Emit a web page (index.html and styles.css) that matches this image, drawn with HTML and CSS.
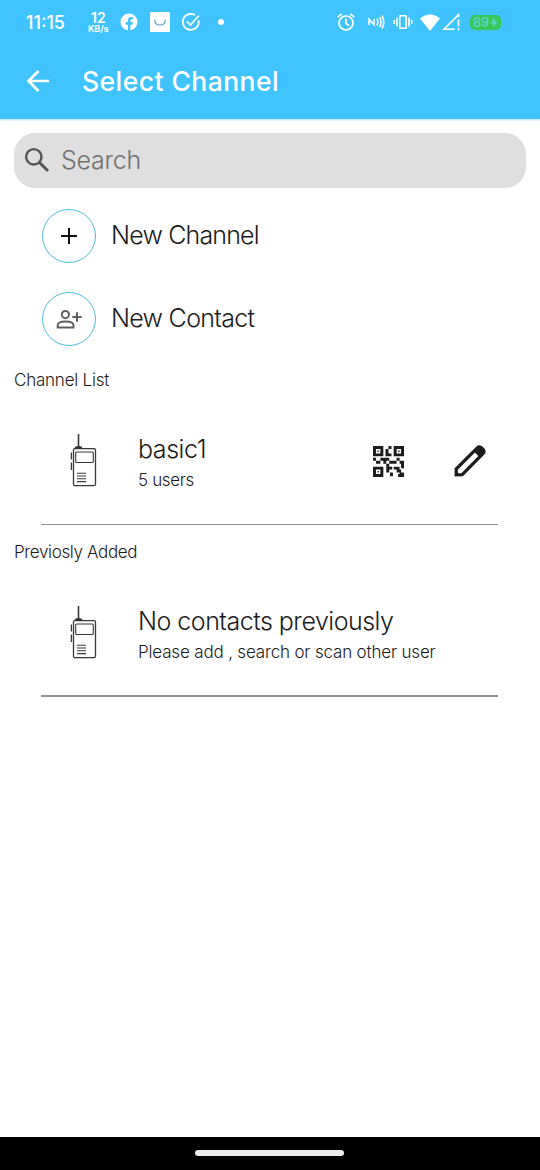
FILE: index.html
```html
<!DOCTYPE html>
<html lang="en">
<head>
<meta charset="utf-8">
<title>Select Channel</title>
<link rel="stylesheet" href="styles.css">
</head>
<body>
<svg class="defs" aria-hidden="true">
  <symbol id="radio" viewBox="0 0 32 56">
    <g fill="none" stroke="#383838" stroke-width="1.3">
      <path d="M8.500 1V14" stroke-width="1.600"/>
      <path d="M5.500 15.500v-1.200q3-1.400 6 0v1.200" fill="#303030"/>
      <rect x="3.500" y="15.700" width="22" height="37" rx="1.500"/>
      <rect x="5.700" y="19" width="17.600" height="10.500" rx="1" stroke-width="1.100"/>
      <path d="M1.400 19.500v7M1.400 29.500v7.500"/>
      <path d="M7 40.200h9M7 43h9M7 45.800h9M7 48.600h9" stroke-width="1.100"/>
    </g>
  </symbol>
</svg>
<header class="header">
  <div class="status">
    <span class="time">11:15</span>
    <span class="speed"><b>12</b><small>KB/s</small></span>
    <svg class="facebook" width="18" height="18" viewBox="0 0 18 18"><circle cx="9" cy="9" r="8.500" fill="#fff"/><path d="M8 18v-6.300H5.700V9H8V7.300Q8 4 11.200 4h1.600v2.300h-1.200q-1.200 0-1.200 1.200V9h2.400l-.4 2.700h-2V18z" fill="#40c4ff"/></svg>
    <svg class="shop" width="20" height="20" viewBox="0 0 20 20"><rect width="20" height="20" rx="1" fill="#fff"/><path d="M4.800 7.500v1q0 4.500 5.200 4.500t5.200-4.500v-1" fill="none" stroke="#5aa5c5" stroke-width="1.200"/></svg>
    <svg class="task" width="20" height="20" viewBox="0 0 20 20" fill="none" stroke="#fff" stroke-width="1.700"><path d="M14 3.100A8 8 0 1 0 17.600 8.300M5.800 9.400l3.600 3.700L17.800 3.700"/></svg>
    <i class="dot"></i>
    <svg class="alarm" width="20" height="20" viewBox="0 0 20 20" fill="none" stroke="#fff" stroke-width="1.700"><circle cx="10" cy="11" r="7"/><path d="M10 6.500v5l3 2M1.700 5.200l4-3.400M18.300 5.200l-4-3.400"/></svg>
    <svg class="nfc" width="18" height="16" viewBox="0 0 18 16" fill="none" stroke="#fff" stroke-width="1.600"><path d="M2 11V5.300l5 5.400V5M10 4.500q1.700 3.500 0 7M12.700 3q2.600 5 0 10M15 1.500q3.600 6.500 0 13"/></svg>
    <svg class="vibrate" width="20" height="16" viewBox="0 0 20 16" fill="none" stroke="#fff" stroke-width="1.600"><rect x="6.800" y="1.800" width="6.400" height="12.400" rx=".5"/><path d="M4 3.500v9M16 3.500v9M1.300 6v4M18.700 6v4"/></svg>
    <svg class="wifi" width="20" height="17" viewBox="0 0 20 17"><path d="M0 4.500Q10-3.700 20 4.500L10 17z" fill="#fff"/></svg>
    <svg class="signal" width="19" height="18" viewBox="0 0 19 18" fill="none" stroke="#fff" stroke-width="1.600"><path d="M12.500 16.200H2L16.500 1.700V4M16.500 6.500v7M16.500 15v2.500"/></svg>
    <span class="battery">89<svg width="8" height="11" viewBox="0 0 9 12"><path d="M6 0L0 7h4l-1 5 6-7H5z" fill="#5fd3c4"/></svg></span>
  </div>
  <div class="appbar">
    <svg class="back" width="24" height="24" viewBox="0 0 24 24" fill="none" stroke="#fff" stroke-width="2.700"><path d="M23 12H3M12.500 2L2.500 12l10 10"/></svg>
    <h1>Select Channel</h1>
  </div>
</header>
<main class="content">
  <div class="search">
    <svg width="26" height="26" viewBox="0 0 26 26" fill="none" stroke="#555"><circle cx="9.800" cy="9.800" r="7.700" stroke-width="2.400"/><path d="M15.500 15.500l8.500 8.500" stroke-width="3"/></svg>
    <span>Search</span>
  </div>
  <div class="action">
    <span class="circle"><svg width="18" height="18" viewBox="0 0 18 18"><path d="M9 1v16M1 9h16" stroke="#111" stroke-width="2"/></svg></span>
    <span class="label channel">New Channel</span>
  </div>
  <div class="action">
    <span class="circle"><svg width="26" height="20" viewBox="0 0 26 20" fill="none" stroke="#606060" stroke-width="2"><circle cx="9.400" cy="5.600" r="3.600"/><path d="M1.700 18.400v-2.200q0-3.700 7.900-3.700t7.900 3.700v2.200zM21 3.300v9.400M16.300 8h9.400"/></svg></span>
    <span class="label contact">New Contact</span>
  </div>
  <h2 class="list-title">Channel List</h2>
  <div class="row">
    <svg class="device" width="32" height="56"><use href="#radio"/></svg>
    <div class="copy"><div class="name basic">basic1</div><div class="sub users">5 users</div></div>
    <svg class="qr" width="31" height="31" viewBox="0 0 21 21" fill="#1c1c1c" fill-rule="evenodd"><path d="M0 0h7v7H0zM2 2v3h3V2zM14 0h7v7h-7zM16 2v3h3V2zM0 14h7v7H0zM2 16v3h3v-3z"/><path d="M3 3h1v1H3zM17 3h1v1h-1zM3 17h1v1H3zM10.500 0h2v2h-2zM8.500 2h2v3h2v2h-4zM0 8h2v2H0zM2 10h3v2H2zM5 8h6v2H9v2H7v-2H5zM11 10h5v2h-5zM16 8h2v2h-2zM18 10h3v5h-2v-3h-1zM9 12h2v2h2v2h-2v2H9zM14 14h4v2h1v2h2v3h-4v-2h1v-1h-2v-2h-2zM11.500 18h2v2.500h-2z"/></svg>
    <svg class="pencil" width="32" height="32" viewBox="0 0 32 32"><path d="M2.200 29.800V24L23.300 2.900q2-2 4.500.3l1.200 1.200q2 2.200 0 4.300L8.200 29.700z" fill="#fff" stroke="#1c1c1c" stroke-width="3.200"/><path d="M19.500 6l4.500-4.500h4L31 4.500V8l-5 4.800zM1 31v-6l6 6z" fill="#1c1c1c"/></svg>
  </div>
  <h2 class="list-title previous">Previosly Added</h2>
  <div class="row last">
    <svg class="device" width="32" height="56"><use href="#radio"/></svg>
    <div class="copy"><div class="name none">No contacts previously</div><div class="sub please">Please add , search or scan other user</div></div>
  </div>
</main>
<footer class="navbar"><i></i></footer>
</body>
</html>
```
FILE: styles.css
```css
* { box-sizing: border-box; }
body { margin: 0; width: 540px; height: 1170px; display: flex; flex-direction: column; background: #fff; color: #1b1b1b; font-family: Inter, Roboto, sans-serif; font-weight: 340; white-space: nowrap; overflow: hidden; }
svg { flex: none; display: block; }
.defs { position: absolute; width: 0; height: 0; }
.header { height: 119px; background: #40c4ff; color: #fff; box-shadow: 0 1px 2px #b5dcf5; }
.status { display: flex; align-items: center; height: 44px; padding-left: 26px; }
.time { width: 62px; font-size: 18px; font-weight: 500; }
.speed { width: 33px; display: flex; flex-direction: column; }
.speed b { font-size: 14px; font-weight: 600; line-height: 13px; padding-left: 3px; }
.speed small { font-size: 9px; font-weight: 700; line-height: 9px; letter-spacing: -.1px; }
.facebook { margin-left: -1px; }
.shop { margin-left: 12px; }
.task { margin-left: 11px; }
.dot { width: 6px; height: 6px; margin-left: 17px; border-radius: 50%; background: #fff; }
.alarm { margin-left: 112px; }
.nfc { margin-left: 11px; }
.vibrate { margin-left: 8px; }
.wifi { margin-left: 7px; }
.signal { margin-left: 2px; }
.battery { display: flex; align-items: center; justify-content: center; gap: 1px; width: 31px; height: 15px; margin-left: 9px; border-radius: 5px; background: #37c85a; color: #5fd3c4; font-size: 12.5px; font-weight: 600; }
.appbar { display: flex; align-items: center; height: 73px; padding-left: 26px; }
h1 { margin: 0 0 0 32px; font-size: 26.5px; font-weight: 500; letter-spacing: .45px; }
.content { flex: 1; padding: 14px 14px 0; }
.search { display: flex; align-items: center; height: 55px; margin-bottom: 6px; padding-left: 10px; border-radius: 21px; background: #dfdfdf; color: #707070; font-size: 25px; }
.search span { margin: 0 0 2px 11px; letter-spacing: -.25px; }
.search svg { margin-bottom: 2px; }
.action { display: flex; align-items: center; height: 83px; padding-left: 28px; }
.circle { display: grid; place-items: center; width: 54px; height: 54px; border: 1px solid #52bce0; border-radius: 50%; }
.label { margin: 0 0 1px 15px; font-size: 25px; }
.channel { letter-spacing: -.82px; }
.contact { letter-spacing: -.7px; }
.list-title { height: 22px; margin: 9px 0 0; font-size: 17px; line-height: 22px; font-weight: 340; letter-spacing: -.22px; }
.row { display: flex; width: 457px; height: 134px; margin-left: 27px; border-bottom: 1px solid #929292; }
.device { margin: 42px 0 0 29px; }
.copy { width: 232px; margin: 41px 0 0 36px; }
.name { height: 34px; font-size: 25px; line-height: 34px; }
.basic { letter-spacing: -.45px; }
.none { letter-spacing: -.5px; }
.sub { margin-top: 3px; font-size: 17px; line-height: 22px; }
.users { letter-spacing: -.35px; }
.please { letter-spacing: -.17px; }
.qr { margin: 55px 0 0 3px; }
.pencil { margin: 54px 0 0 50px; }
.previous { margin-top: 16px; letter-spacing: -.35px; }
.last { border-bottom-width: 2px; }
.navbar { display: flex; justify-content: center; height: 33px; padding-right: 1px; background: #000; }
.navbar i { width: 149px; height: 6px; margin-top: 13px; border-radius: 3px; background: #ececec; }
```
